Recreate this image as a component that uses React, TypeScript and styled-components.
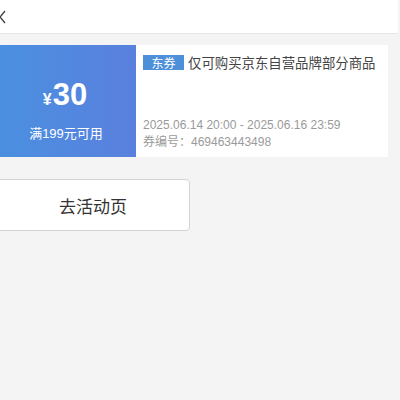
import React from "react";
import styled, { createGlobalStyle } from "styled-components";

const Global = createGlobalStyle`
  html, body { margin: 0; padding: 0; background: #f4f4f4; overflow: hidden; }
  body { font-family: "Liberation Sans", "Noto Sans CJK SC", sans-serif; }
`;

const Page = styled.div`
  width: 412px;
  margin-left: -14px;
  min-height: 400px;
  background: #f4f4f4;
`;

const Header = styled.div`
  height: 33px;
  background: #fff;
  border-bottom: 1px solid #e6e6e6;
  display: flex;
  align-items: center;
  padding-left: 12px;
`;

const Back = styled.svg`
  width: 10px;
  height: 14px;
`;

const Content = styled.div`
  padding: 11px 10px 0;
  display: flex;
  flex-direction: column;
  align-items: flex-start;
`;

const Card = styled.div`
  width: 392px;
  height: 112px;
  display: flex;
  background: #fff;
`;

const Amount = styled.div`
  width: 140px;
  flex: none;
  box-sizing: border-box;
  padding-top: 33px;
  background: linear-gradient(90deg, #4a90e0 0%, #5a80de 100%);
  color: #fff;
  display: flex;
  flex-direction: column;
  align-items: center;
`;

const Price = styled.div`
  display: flex;
  align-items: baseline;
  font-family: "Liberation Sans", Arial, sans-serif;
  font-weight: bold;
  margin-right: 2px;
`;

const Yen = styled.span`
  font-size: 16px;
  margin-right: 1px;
`;

const Num = styled.span`
  font-size: 31px;
  line-height: 34px;
`;

const Cond = styled.div`
  font-size: 13px;
  line-height: 16px;
  margin-top: 14px;
  font-family: "Liberation Sans", "Noto Sans CJK SC", sans-serif;
`;

const Info = styled.div`
  flex: 1;
  padding: 7px 7px 6px;
  display: flex;
  flex-direction: column;
  font-family: "Liberation Sans", "Noto Sans CJK SC", sans-serif;
`;

const TitleRow = styled.div`
  display: flex;
  align-items: center;
  gap: 4px;
`;

const Tag = styled.span`
  display: inline-flex;
  align-items: center;
  justify-content: center;
  width: 41px;
  height: 15px;
  background: #4e8fd9;
  color: #fff;
  font-size: 12px;
`;

const Title = styled.span`
  font-size: 13.4px;
  color: #444;
  white-space: nowrap;
`;

const Spacer = styled.div`
  flex: 1;
`;

const Meta = styled.div`
  font-size: 12px;
  line-height: 17px;
  color: #9a9a9a;
  white-space: nowrap;
`;

const ActionButton = styled.button`
  margin-top: 22px;
  width: 194px;
  height: 52px;
  background: #fff;
  border: 1px solid #d4d4d4;
  border-radius: 4px;
  font-family: "Noto Sans CJK SC", sans-serif;
  font-size: 17px;
  color: #333;
  display: flex;
  align-items: center;
  justify-content: center;
  padding: 0;
`;

export default function App() {
  return (
    <>
      <Global />
      <Page>
        <Header>
          <Back viewBox="0 0 10 14">
            <path d="M7 1 L2 7 L7 13" fill="none" stroke="#444" strokeWidth="1.4" />
          </Back>
        </Header>
        <Content>
          <Card>
            <Amount>
              <Price>
                <Yen>¥</Yen>
                <Num>30</Num>
              </Price>
              <Cond>满199元可用</Cond>
            </Amount>
            <Info>
              <TitleRow>
                <Tag>东券</Tag>
                <Title>仅可购买京东自营品牌部分商品</Title>
              </TitleRow>
              <Spacer />
              <Meta>2025.06.14 20:00 - 2025.06.16 23:59</Meta>
              <Meta>券编号：469463443498</Meta>
            </Info>
          </Card>
          <ActionButton>去活动页</ActionButton>
        </Content>
      </Page>
    </>
  );
}
